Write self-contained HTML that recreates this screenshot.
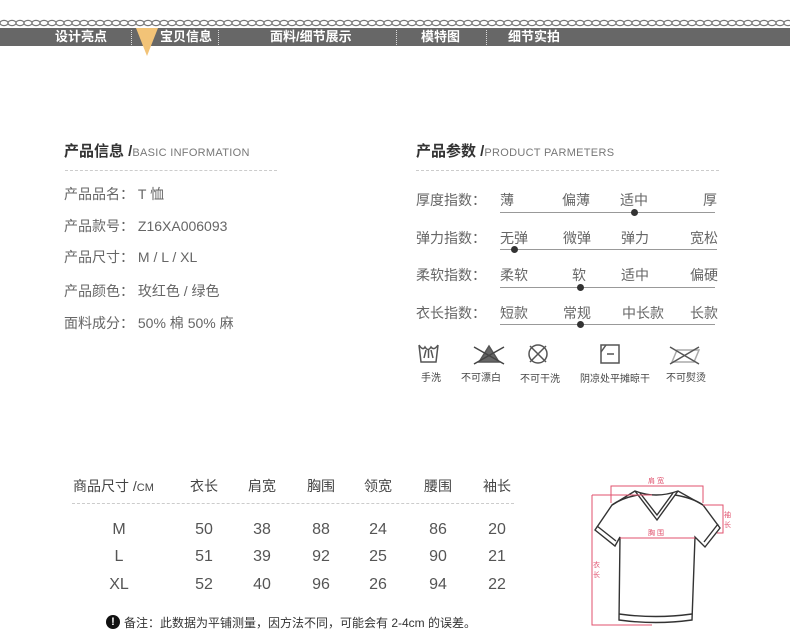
<!DOCTYPE html>
<html><head><meta charset="utf-8">
<style>
*{margin:0;padding:0;box-sizing:border-box}
body{width:790px;height:639px;background:#fff;position:relative;overflow:hidden;font-family:"Liberation Sans","Noto Sans CJK SC",sans-serif;color:#555}
.a{position:absolute;white-space:nowrap}
.band{position:absolute;left:0;top:28px;width:790px;height:18px;background:#676767}
.nav{position:absolute;top:28px;height:18px;line-height:18px;color:#fff;font-size:13px;font-weight:bold}
.sep{position:absolute;top:30px;height:15px;border-left:1px dotted #ddd}
.t{font-size:15px;font-weight:bold;color:#333}
.t span{font-size:11px;font-weight:normal;color:#777;letter-spacing:.3px}
.dash{position:absolute;height:0;border-top:1px dashed #ccc}
.r{font-size:14px;color:#666}
.line{position:absolute;height:1px;background:#999}
.dot{position:absolute;width:7px;height:7px;border-radius:50%;background:#333}
.cap{font-size:10px;color:#444}
.tb{font-size:14px;color:#444}
.num{font-size:16px;color:#555;text-align:center;width:40px}
</style></head><body>
<svg class="a" style="left:0;top:18px" width="790" height="10">
<defs><pattern id="ch" width="8" height="10" patternUnits="userSpaceOnUse"><ellipse cx="4" cy="5" rx="4" ry="2.6" fill="none" stroke="#777" stroke-width="1.2"/></pattern></defs>
<rect width="790" height="10" fill="url(#ch)"/></svg>
<div class="band"></div>
<svg class="a" style="left:136px;top:28px" width="22" height="28"><polygon points="0,0 22,0 11,28" fill="#f2c377"/></svg>
<div class="nav" style="left:55px">设计亮点</div>
<div class="sep" style="left:131px"></div>
<div class="nav" style="left:160px">宝贝信息</div>
<div class="sep" style="left:218px"></div>
<div class="nav" style="left:270px">面料/细节展示</div>
<div class="sep" style="left:396px"></div>
<div class="nav" style="left:421px">模特图</div>
<div class="sep" style="left:486px"></div>
<div class="nav" style="left:508px">细节实拍</div>

<div class="a t" style="left:64px;top:140px">产品信息 /<span>BASIC INFORMATION</span></div>
<div class="dash" style="left:65px;top:170px;width:212px"></div>
<div class="a r" style="left:64px;top:184px">产品品名：&nbsp;T 恤</div>
<div class="a r" style="left:64px;top:216px">产品款号：&nbsp;Z16XA006093</div>
<div class="a r" style="left:64px;top:247px">产品尺寸：&nbsp;M / L / XL</div>
<div class="a r" style="left:64px;top:281px">产品颜色：&nbsp;玫红色 / 绿色</div>
<div class="a r" style="left:64px;top:313px">面料成分：&nbsp;50% 棉 50% 麻</div>

<div class="a t" style="left:416px;top:140px">产品参数 /<span>PRODUCT PARMETERS</span></div>
<div class="dash" style="left:416px;top:170px;width:303px"></div>

<div class="a r" style="left:416px;top:190px">厚度指数：</div>
<div class="a r" style="left:500px;top:190px">薄</div><div class="a r" style="left:562px;top:190px">偏薄</div><div class="a r" style="left:620px;top:190px">适中</div><div class="a r" style="left:703px;top:190px">厚</div>
<div class="line" style="left:500px;top:212px;width:215px"></div><div class="dot" style="left:631px;top:209px"></div>

<div class="a r" style="left:416px;top:228px">弹力指数：</div>
<div class="a r" style="left:500px;top:228px">无弹</div><div class="a r" style="left:563px;top:228px">微弹</div><div class="a r" style="left:621px;top:228px">弹力</div><div class="a r" style="left:690px;top:228px">宽松</div>
<div class="line" style="left:500px;top:249px;width:217px"></div><div class="dot" style="left:511px;top:246px"></div>

<div class="a r" style="left:416px;top:265px">柔软指数：</div>
<div class="a r" style="left:500px;top:265px">柔软</div><div class="a r" style="left:572px;top:265px">软</div><div class="a r" style="left:621px;top:265px">适中</div><div class="a r" style="left:690px;top:265px">偏硬</div>
<div class="line" style="left:500px;top:287px;width:215px"></div><div class="dot" style="left:577px;top:284px"></div>

<div class="a r" style="left:416px;top:303px">衣长指数：</div>
<div class="a r" style="left:500px;top:303px">短款</div><div class="a r" style="left:563px;top:303px">常规</div><div class="a r" style="left:622px;top:303px">中长款</div><div class="a r" style="left:690px;top:303px">长款</div>
<div class="line" style="left:500px;top:324px;width:215px"></div><div class="dot" style="left:577px;top:321px"></div>

<svg class="a" style="left:416px;top:342px" width="300" height="24" fill="none" stroke="#555" stroke-width="1.5">
<path d="M3 3 L5 20 H20 L22 3 M3 3 Q7 9 9 5 Q12 10 15 5 Q18 9 22 3 M10 8 L8 16 M12.5 8 V16 M15 8 L17 16"/>
<path d="M63 20 L73 4 L83 20 Z" fill="#666"/><path d="M58 5 L88 22 M88 5 L58 22" stroke="#444"/>
<circle cx="122" cy="12" r="9"/><path d="M114 4 L130 20 M130 4 L114 20"/>
<rect x="185" y="3" width="18" height="18"/><path d="M185 10 L190 3 M191 12 H198"/>
<path d="M256 20 L261 8 H283 L278 20 Z" stroke="#aaa"/><path d="M254 5 L283 22 M283 5 L254 22"/>
</svg>
<div class="a cap" style="left:421px;top:369px">手洗</div>
<div class="a cap" style="left:461px;top:369px">不可漂白</div>
<div class="a cap" style="left:520px;top:370px">不可干洗</div>
<div class="a cap" style="left:580px;top:370px">阴凉处平摊晾干</div>
<div class="a cap" style="left:666px;top:369px">不可熨烫</div>

<div class="a tb" style="left:73px;top:476px">商品尺寸 /<span style="font-size:11px">CM</span></div>
<div class="a tb" style="left:190px;top:476px">衣长</div>
<div class="a tb" style="left:248px;top:476px">肩宽</div>
<div class="a tb" style="left:307px;top:476px">胸围</div>
<div class="a tb" style="left:364px;top:476px">领宽</div>
<div class="a tb" style="left:424px;top:476px">腰围</div>
<div class="a tb" style="left:483px;top:476px">袖长</div>
<div class="dash" style="left:72px;top:503px;width:442px"></div>
<div class="a num" style="left:99px;top:521px">M</div>
<div class="a num" style="left:99px;top:548px">L</div>
<div class="a num" style="left:99px;top:576px">XL</div>
<div class="a num" style="left:184px;top:521px">50</div><div class="a num" style="left:242px;top:521px">38</div><div class="a num" style="left:301px;top:521px">88</div><div class="a num" style="left:358px;top:521px">24</div><div class="a num" style="left:418px;top:521px">86</div><div class="a num" style="left:477px;top:521px">20</div>
<div class="a num" style="left:184px;top:548px">51</div><div class="a num" style="left:242px;top:548px">39</div><div class="a num" style="left:301px;top:548px">92</div><div class="a num" style="left:358px;top:548px">25</div><div class="a num" style="left:418px;top:548px">90</div><div class="a num" style="left:477px;top:548px">21</div>
<div class="a num" style="left:184px;top:576px">52</div><div class="a num" style="left:242px;top:576px">40</div><div class="a num" style="left:301px;top:576px">96</div><div class="a num" style="left:358px;top:576px">26</div><div class="a num" style="left:418px;top:576px">94</div><div class="a num" style="left:477px;top:576px">22</div>
<div class="a" style="left:106px;top:615px;width:14px;height:14px;border-radius:50%;background:#111;color:#fff;font-size:11px;font-weight:bold;text-align:center;line-height:14px">!</div>
<div class="a" style="left:124px;top:614px;font-size:12px;color:#333">备注：此数据为平铺测量，因方法不同，可能会有 2-4cm 的误差。</div>

<svg class="a" style="left:580px;top:465px" width="160" height="170">
<g fill="none" stroke="#333" stroke-width="1.4">
<path d="M55 26 L32 40 L15 65 L35 81 L40 72 L39 155 Q76 160 112 155 L115 72 L125 82 L140 63 L123 40 L98 26 Q76 34 55 26 Z"/>
<path d="M55 26 L77 55 L98 26 M60 28 L77 50 L93 28"/>
<path d="M17 61 L36 76 M138 59 L124 77 M39 149 Q76 154 112 149"/>
<path d="M32 40 Q42 33 58 30 M123 40 Q113 33 95 30"/>
</g>
<g fill="none" stroke="#e0526e" stroke-width="1">
<path d="M31 38 V21 H123 V38"/>
<path d="M12 30 H72 M12 30 V160 H72"/>
<path d="M40 73 H115"/>
<path d="M123 40 H143 V68 H137"/>
</g>
<g fill="#e0526e" font-size="7" font-family="Liberation Sans,Noto Sans CJK SC,sans-serif">
<text x="68" y="18">肩 宽</text>
<text x="68" y="70">胸 围</text>
<text x="144" y="52">袖</text><text x="144" y="62">长</text>
<text x="13" y="102">衣</text><text x="13" y="112">长</text>
</g>
</svg>
</body></html>
